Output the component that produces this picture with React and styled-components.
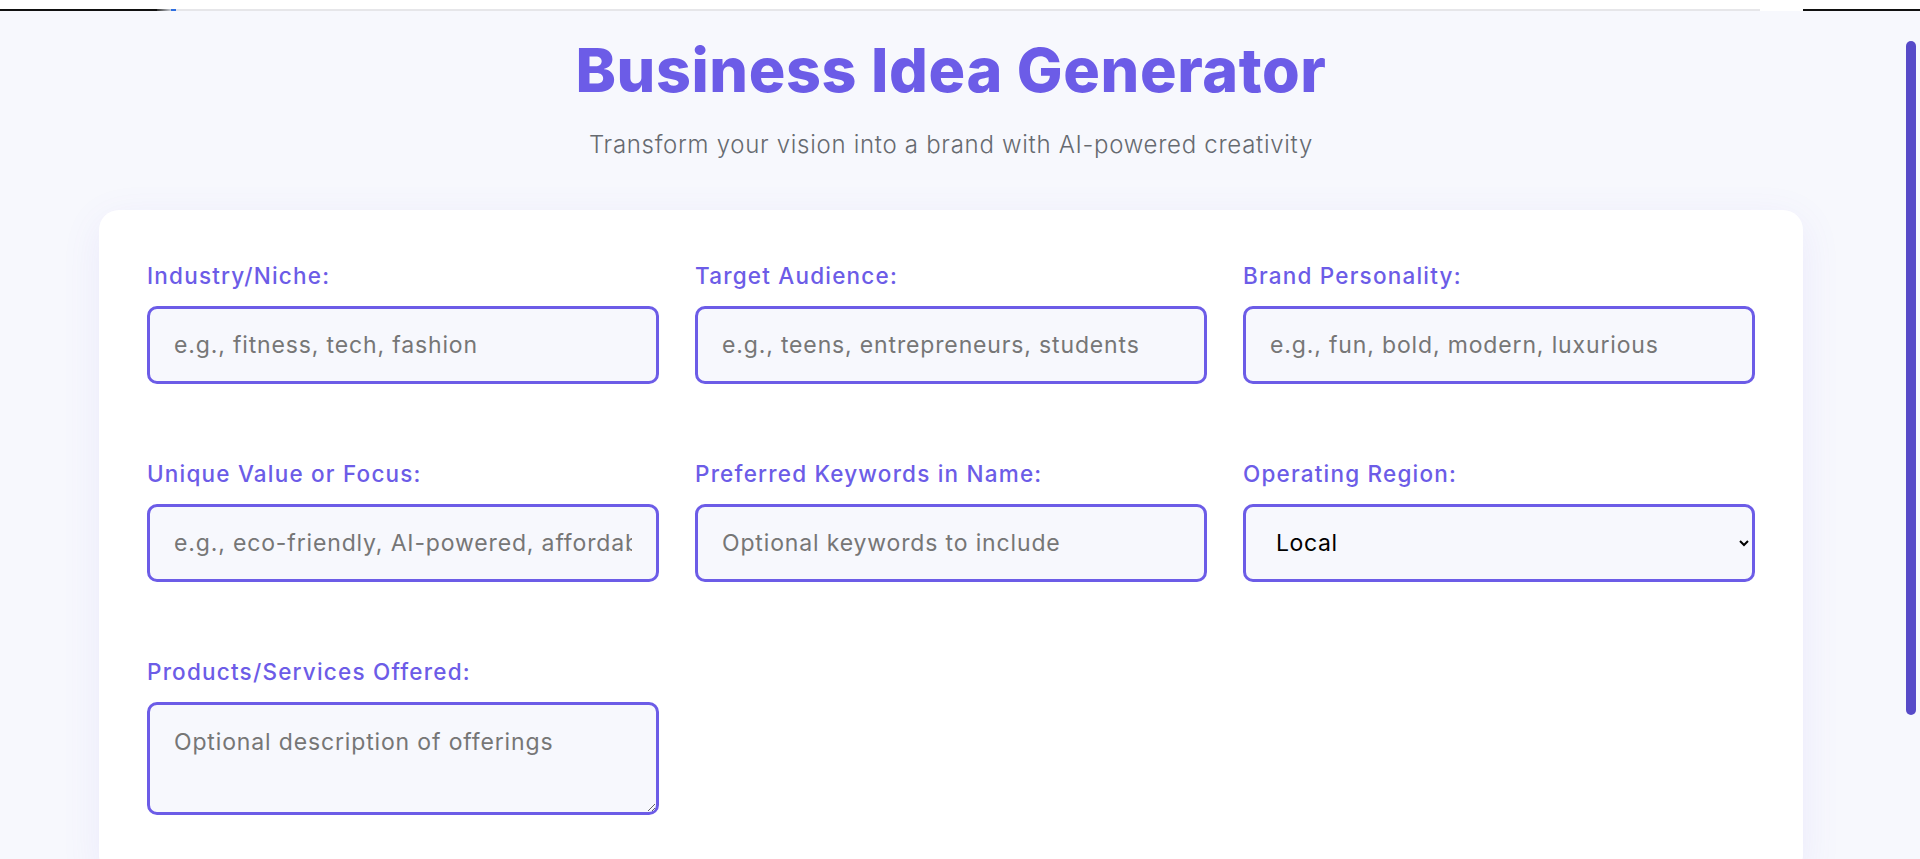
import React from "react";
import styled, { createGlobalStyle } from "styled-components";

const PURPLE = "#6c5ce7";
const BG = "#f7f8fd";

const GlobalStyle = createGlobalStyle`
  html, body {
    margin: 0;
    padding: 0;
    background: ${BG};
    overflow: hidden;
  }
  * { box-sizing: border-box; }
  body {
    font-family: Inter, "Noto Sans", "Liberation Sans", sans-serif;
  }
`;

const Shell = styled.div`
  height: 100vh;
  display: flex;
  flex-direction: column;
  overflow: hidden;
  background: ${BG};
`;

const TopBar = styled.div`
  height: 9px;
  background: #ffffff;
  flex: none;
`;

const Rule = styled.div`
  height: 2px;
  display: flex;
  flex: none;
`;

const RuleSegment = styled.div`
  height: 2px;
  width: ${(p) => (p.$w ? `${p.$w}px` : "auto")};
  flex: ${(p) => (p.$grow ? 1 : "none")};
  background: ${(p) => p.$color};
`;

const Body = styled.div`
  flex: 1;
  display: flex;
  min-height: 0;
`;

const Main = styled.main`
  flex: 1;
  min-width: 0;
  overflow: hidden;
  display: flex;
  flex-direction: column;
  align-items: center;
`;

const Gutter = styled.div`
  width: 18px;
  flex: none;
  padding: 30px 4px 0 4px;
`;

const Thumb = styled.div`
  width: 10px;
  height: 674px;
  border-radius: 5px;
  background: #574ac8;
`;

const Header = styled.header`
  padding-top: 23px;
  display: flex;
  flex-direction: column;
  align-items: center;
`;

const Title = styled.h1`
  margin: 0;
  font-size: 61px;
  line-height: 72px;
  font-weight: 800;
  letter-spacing: 0.6px;
  color: ${PURPLE};
`;

const Subtitle = styled.p`
  margin: 22px 0 0;
  font-size: 24px;
  line-height: 33px;
  font-weight: 300;
  letter-spacing: 0.7px;
  color: #666a70;
`;

const Card = styled.section`
  margin-top: 49px;
  width: 1704px;
  background: #ffffff;
  border-radius: 20px;
  padding: 52px 48px 60px;
  box-shadow: 0 10px 40px rgba(108, 92, 231, 0.09);
`;

const FormGrid = styled.div`
  display: grid;
  grid-template-columns: repeat(3, 1fr);
  column-gap: 36px;
  row-gap: 76px;
`;

const Field = styled.div`
  display: flex;
  flex-direction: column;
  gap: 16px;
`;

const Label = styled.label`
  font-size: 22.5px;
  line-height: 28px;
  font-weight: 500;
  letter-spacing: 1.2px;
  color: ${PURPLE};
`;

const controlBase = `
  width: 100%;
  border: 3px solid ${PURPLE};
  border-radius: 10px;
  background: ${BG};
  font-family: Inter, "Noto Sans", "Liberation Sans", sans-serif;
  font-size: 23px;
  letter-spacing: 0.85px;
  color: #111;
  outline: none;
  &::placeholder { color: #767676; opacity: 1; }
`;

const TextInput = styled.input`
  ${controlBase}
  height: 78px;
  padding: 0 24px;
`;

const Select = styled.select`
  ${controlBase}
  height: 78px;
  padding: 0 24px 0 26px;
  color: #000;
  letter-spacing: 0.6px;
`;

const TextArea = styled.textarea`
  ${controlBase}
  height: 113px;
  padding: 22px 24px 18px;
  line-height: 30px;
  resize: vertical;
`;

const fields = [
  { label: "Industry/Niche:", placeholder: "e.g., fitness, tech, fashion" },
  { label: "Target Audience:", placeholder: "e.g., teens, entrepreneurs, students" },
  { label: "Brand Personality:", placeholder: "e.g., fun, bold, modern, luxurious" },
  { label: "Unique Value or Focus:", placeholder: "e.g., eco-friendly, AI-powered, affordable" },
  { label: "Preferred Keywords in Name:", placeholder: "Optional keywords to include" },
];

export default function App() {
  return (
    <>
      <GlobalStyle />
      <Shell>
        <TopBar />
        <Rule>
          <RuleSegment $w={157} $color="#111" />
          <RuleSegment $w={14} $color="linear-gradient(90deg,#333,#cfd3da)" />
          <RuleSegment $w={5} $color="#2f6fe0" />
          <RuleSegment $grow $color="#e6e6e9" />
          <RuleSegment $w={43} $color="#ffffff" />
          <RuleSegment $w={117} $color="#111" />
        </Rule>
        <Body>
          <Main>
            <Header>
              <Title>Business Idea Generator</Title>
              <Subtitle>Transform your vision into a brand with AI-powered creativity</Subtitle>
            </Header>
            <Card>
              <FormGrid>
                {fields.map((f) => (
                  <Field key={f.label}>
                    <Label>{f.label}</Label>
                    <TextInput type="text" placeholder={f.placeholder} />
                  </Field>
                ))}
                <Field>
                  <Label>Operating Region:</Label>
                  <Select defaultValue="Local">
                    <option>Local</option>
                    <option>National</option>
                    <option>Global</option>
                  </Select>
                </Field>
                <Field>
                  <Label>Products/Services Offered:</Label>
                  <TextArea placeholder="Optional description of offerings" />
                </Field>
              </FormGrid>
            </Card>
          </Main>
          <Gutter>
            <Thumb />
          </Gutter>
        </Body>
      </Shell>
    </>
  );
}
